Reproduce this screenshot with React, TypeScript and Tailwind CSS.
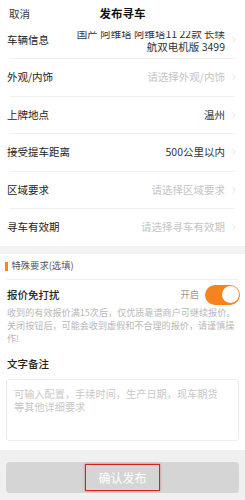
import { ChevronRight } from "lucide-react"

const font = { fontFamily: '"Noto Sans CJK SC", "Noto Sans", sans-serif' }

type Row = { label: string; value: string; filled?: boolean }

const rows: Row[] = [
  { label: "外观/内饰", value: "请选择外观/内饰" },
  { label: "上牌地点", value: "温州", filled: true },
  { label: "接受提车距离", value: "500公里以内", filled: true },
  { label: "区域要求", value: "请选择区域要求" },
  { label: "寻车有效期", value: "请选择寻车有效期" },
]

function Divider() {
  return <div className="mx-[10px] h-px bg-[#f0f0f0]" />
}

export default function App() {
  return (
    <div className="flex h-[500px] w-[245px] flex-col bg-white text-[#222]" style={font}>
      {/* header */}
      <div className="relative z-10 flex h-[31px] shrink-0 items-center justify-center bg-white">
        <span className="absolute left-[9px] top-[7px] text-[10.5px] leading-[14px] text-[#333]">取消</span>
        <span className="-mt-[3px] text-[11.5px] font-bold text-[#111]">发布寻车</span>
      </div>

      {/* scrolled content */}
      <div className="flex-1 overflow-hidden">
        <div className="-mt-[9px]">
          {/* vehicle info */}
          <div className="flex h-[36px] items-center pl-[7px] pr-[6px]">
            <span className="text-[10.5px] text-[#222]">车辆信息</span>
            <div className="ml-auto text-right text-[10.5px] leading-[13.5px] text-[#333]">
              <div>国产 阿维塔 阿维塔11 22款 长续</div>
              <div>航双电机版 3499</div>
            </div>
            <ChevronRight className="ml-[4px] shrink-0 text-[#d0d0d0]" size={10} strokeWidth={1.5} />
          </div>
          <Divider />

          {rows.map((r, i) => (
            <div key={r.label}>
              <div className="flex h-[36.5px] items-center pl-[7px] pr-[6px]">
                <span className="text-[10.5px] text-[#222]">{r.label}</span>
                <span className={"ml-auto text-[10.5px] " + (r.filled ? "text-[#333]" : "text-[#c4c4c4]")}>{r.value}</span>
                <ChevronRight className="ml-[4px] shrink-0 text-[#d0d0d0]" size={10} strokeWidth={1.5} />
              </div>
              {i < rows.length - 1 && <Divider />}
            </div>
          ))}

          <div className="h-[8px] bg-[#f2f2f2]" />

          {/* special requirements */}
          <div className="flex h-[25px] items-center gap-[4px] pl-[5px]">
            <span className="h-[9px] w-[2.5px] bg-[#f5891f]" />
            <span className="text-[9.3px] text-[#555]">特殊要求(选填)</span>
          </div>
          <div className="mx-[7px] h-px bg-[#f0f0f0]" />

          <div className="flex h-[26.5px] items-center pl-[7px] pr-[5px] pt-[4px]">
            <span className="text-[10.5px] font-medium text-[#222]">报价免打扰</span>
            <span className="ml-auto mr-[6px] text-[9.3px] text-[#999]">开启</span>
            <div className="flex h-[20px] w-[35px] items-center justify-end rounded-full bg-[#f5831f] pr-[1.5px]">
              <span className="h-[17px] w-[17px] rounded-full bg-white" />
            </div>
          </div>
          <div className="whitespace-nowrap px-[7px] text-[9.1px] leading-[13px] text-[#b8b8b8]">
            <div>收到的有效报价满15次后，仅优质靠谱商户可继续报价。</div>
            <div>关闭按钮后，可能会收到虚假和不合理的报价，请谨慎操</div>
            <div>作!</div>
          </div>

          <div className="mt-[11.5px] px-[7px] text-[10.5px] font-medium leading-[14px] text-[#222]">文字备注</div>
          <div className="mx-[6px] mt-[8px] h-[62px] rounded-[3px] border border-[#ececec] px-[7px] pt-[7px] text-[10.2px] leading-[13px] text-[#c8c8c8]">
            <div>可输入配置，手续时间，生产日期，现车期货</div>
            <div>等其他详细要求</div>
          </div>
        </div>
      </div>

      {/* footer */}
      <div className="h-[50px] shrink-0 bg-[#f0f0f0] px-[6px] pt-[12px]">
        <div className="flex h-[31px] items-center justify-center rounded-[4px] bg-[#d5d5d5]">
          <div className="flex h-[27px] w-[75px] items-center justify-center border-[1.5px] border-[#d8201c] shadow-[0_0_2px_rgba(216,32,28,0.6)]">
            <span className="text-[12px] text-white">确认发布</span>
          </div>
        </div>
      </div>
    </div>
  )
}
